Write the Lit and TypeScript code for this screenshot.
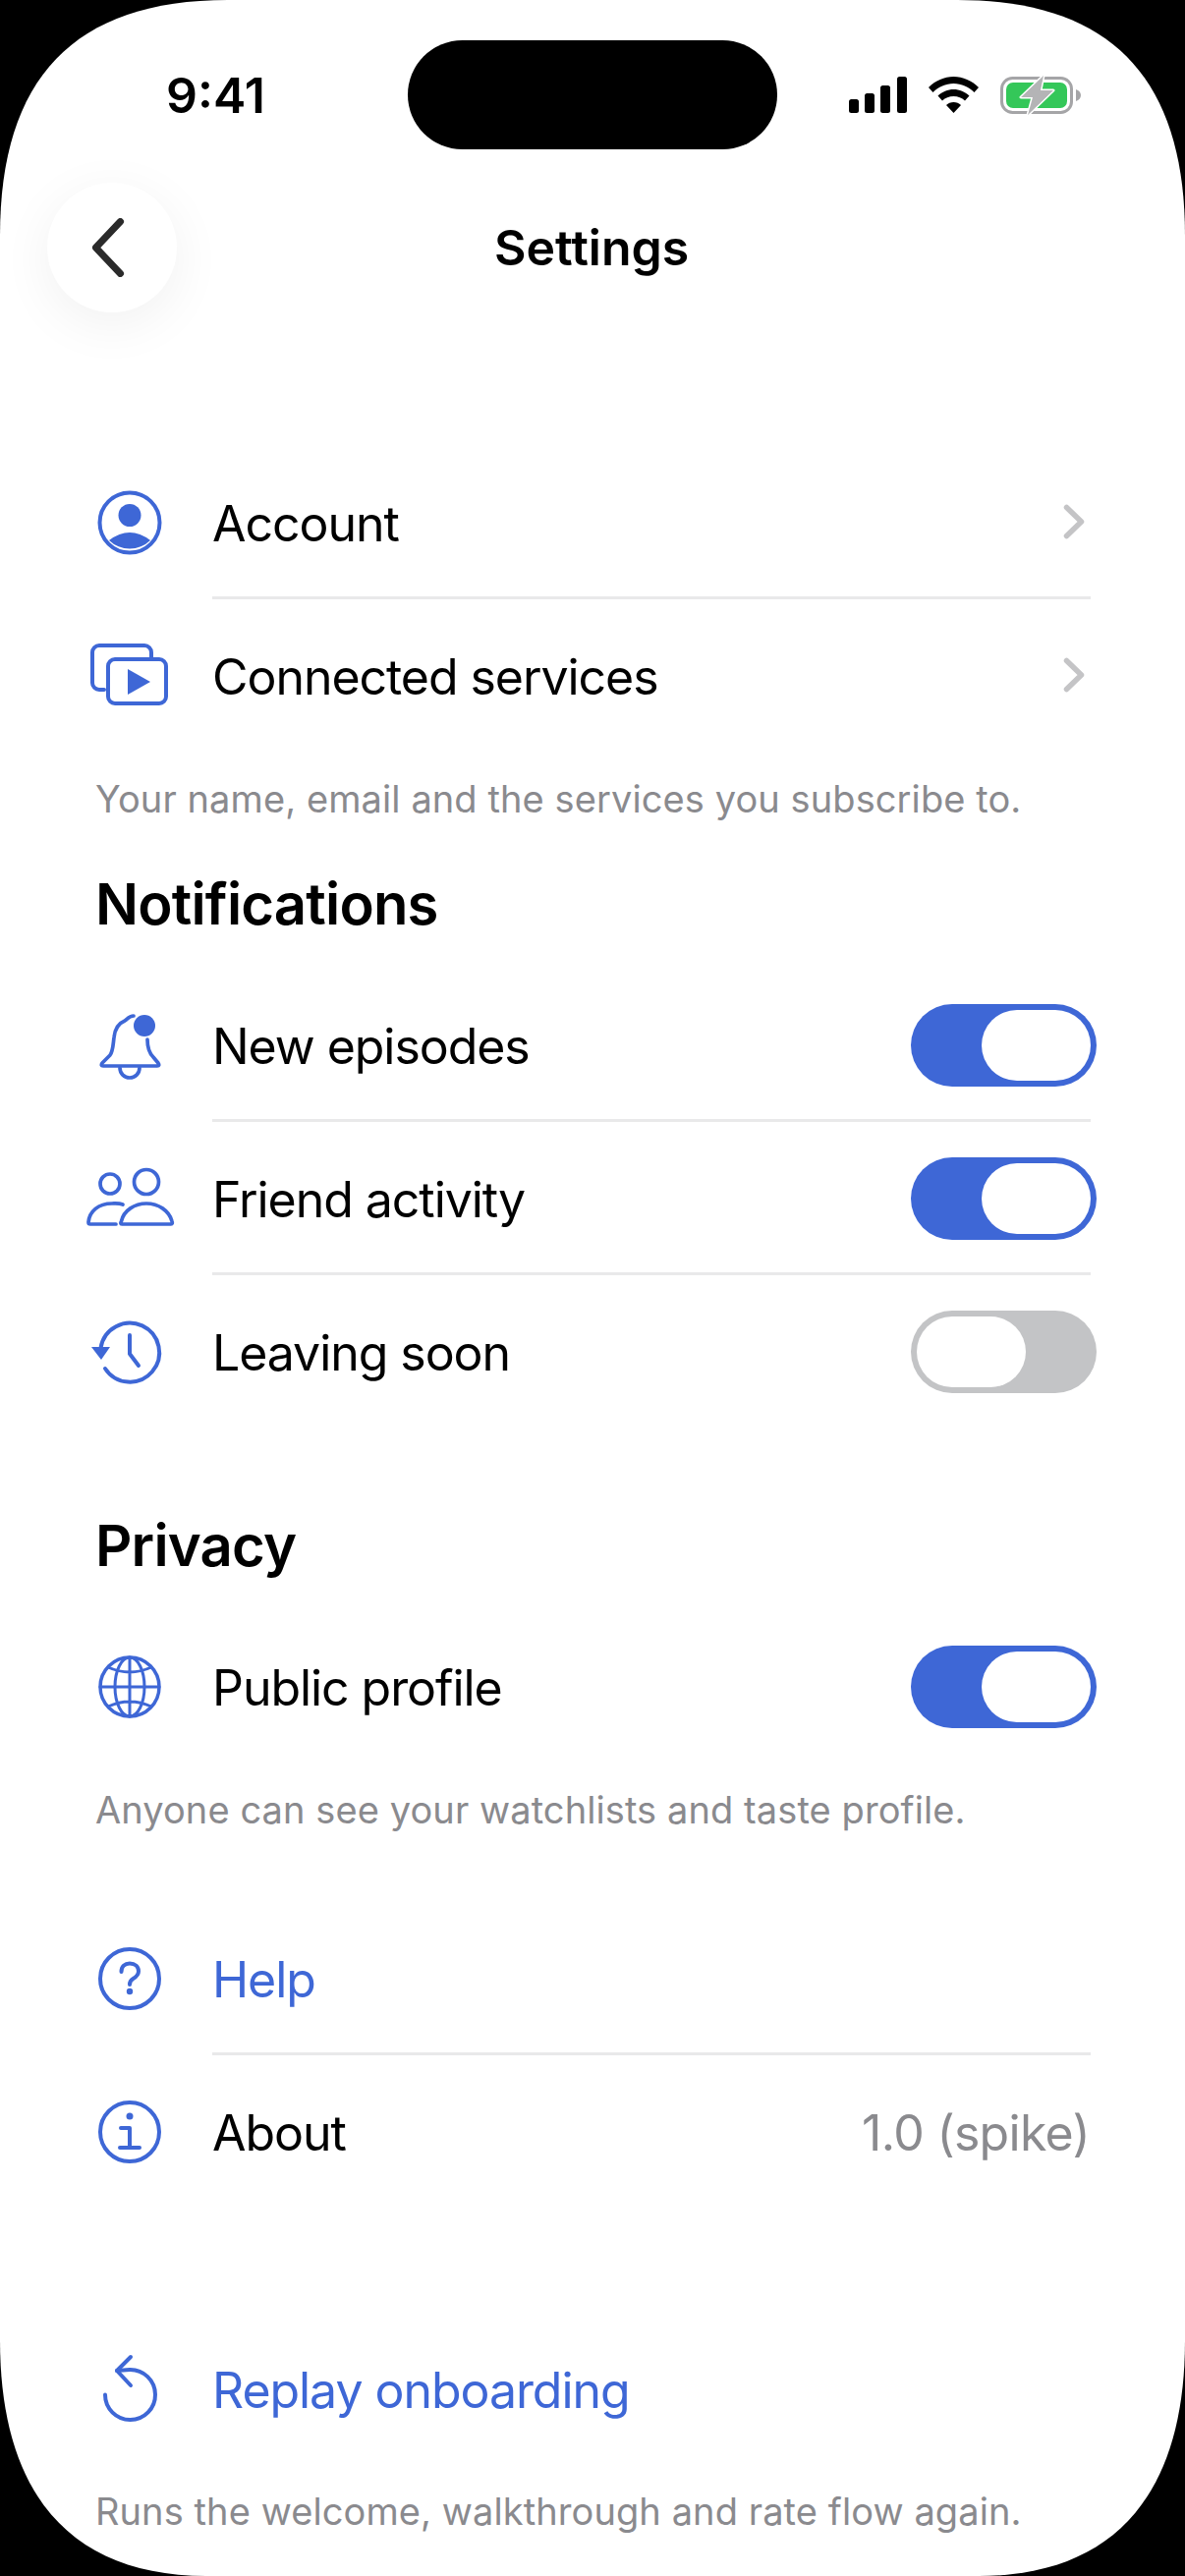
import { LitElement, html, svg, css, nothing } from 'lit';
import { customElement } from 'lit/decorators.js';

const icons: Record<string, unknown> = {
  account: svg`<circle cx="60" cy="60" r="30.5" fill="none" stroke-width="4"/><circle cx="60" cy="52.5" r="11.5" class="solid"/><path class="solid" d="M39 78Q60 62 81 78A30 30 0 0 1 39 78Z"/>`,
  services: svg`<path d="M34 74H29a7 7 0 0 1-7-7V36a7 7 0 0 1 7-7H75a7 7 0 0 1 7 7V41" stroke-width="4"/><rect x="38" y="43" width="59" height="45" rx="7" stroke-width="4"/><path class="solid" d="M58 53L81 66L58 79Z"/>`,
  bell: svg`<path d="M78 54C78 62 80 68 84 72L89 78Q91 81 88 81H33Q30 81 32 78L40 70C43 66 43 60 44 52C45 42 50 37 55 35C58 33 59 30 64 30"/><path d="M50 83A10 10 0 0 0 70 83"/><circle cx="75" cy="40" r="11" class="solid"/>`,
  friends: svg`<circle cx="40" cy="45" r="10"/><circle cx="77" cy="43" r="12.5"/><path d="M53 66C49 64.5 45 65 42 65C28 65 19 73 18 84Q18 86 20 86H46"/><path d="M52 86Q50 86 51.5 83C54 72 65 65 77 65C89 65 100 72 103 83Q104 86 102 86Z"/>`,
  history: svg`<path d="M30.5 56A30 30 0 1 1 35 77" stroke-width="4"/><path class="solid" d="M21 55H40L31 68Z"/><path d="M60 43V62L69 74" stroke-width="4"/>`,
  globe: svg`<circle cx="60" cy="60" r="30" stroke-width="3.5"/><ellipse cx="60" cy="60" rx="15" ry="30" stroke-width="3"/><path d="M60 30V90M30 60H90M38 40Q60 50 82 40M38 80Q60 70 82 80" stroke-width="3"/>`,
  help: svg`<circle cx="60" cy="60" r="30" stroke-width="4"/><path d="M51.5 53C51.5 47.5 55 44.5 60 44.5C65.5 44.5 69 48 69 52.5C69 56.5 66 58.5 63.5 60C61 61.5 60 63 60 66" stroke-width="4"/><circle cx="60" cy="73" r="3.2" class="solid"/>`,
  info: svg`<circle cx="60" cy="60" r="30" stroke-width="4"/><circle cx="60" cy="44" r="3.5" class="solid"/><path d="M51 56H60V76M50 76H70" stroke-width="4"/>`,
  replay: svg`<path d="M47 41L60 40A25.500 25.500 0 1 1 35 65.500" stroke-width="4"/><path d="M61 27L47 41L61 56" stroke-width="4"/>`,
};

@customElement('app-root')
export class AppRoot extends LitElement {
  static styles = css`
    :host {
      display: block;
      width: 1206px;
      height: 2622px;
      overflow: hidden;
      background: #000;
      font-family: Inter, 'Liberation Sans', sans-serif;
      color: #000;
    }
    .screen {
      height: 2622px;
      overflow: hidden;
      background: #fff;
      clip-path: path('M232 0H974C1131 0 1206 80 1206 240V2382C1206 2542 1131 2622 996 2622H210C75 2622 0 2542 0 2382V240C0 80 75 0 232 0Z');
    }
    .status {
      display: flex;
      align-items: center;
      height: 111px;
      padding: 41px 0 0 169px;
    }
    .time {
      width: 246px;
      font-size: 50px;
      font-weight: 600;
    }
    .island {
      width: 376px;
      height: 111px;
      border-radius: 56px;
      background: #000;
    }
    .status-icons {
      display: flex;
      align-items: center;
      margin-left: 73px;
      gap: 22px;
    }
    .header {
      display: flex;
      align-items: center;
      height: 133px;
      margin-top: 33px;
      padding-left: 48px;
    }
    .back {
      display: flex;
      align-items: center;
      justify-content: center;
      width: 132px;
      height: 132px;
      flex-shrink: 0;
      border-radius: 50%;
      background: #fff;
      box-shadow: 0 12px 54px rgba(0, 0, 0, 0.06);
    }
    .back svg {
      margin-right: 7px;
    }
    .title {
      margin-left: 323px;
      width: 195px;
      font-size: 50px;
      font-weight: 600;
      text-align: center;
      white-space: nowrap;
    }
    .account {
      margin-top: 136px;
    }
    .row {
      display: flex;
      align-items: stretch;
      height: 156px;
      padding-left: 84px;
      padding-right: 96px;
      box-sizing: border-box;
    }
    .icon {
      display: flex;
      align-items: center;
      justify-content: center;
      width: 96px;
      margin-right: 36px;
      flex-shrink: 0;
    }
    .icon svg {
      width: 120px;
      height: 120px;
      flex-shrink: 0;
      fill: none;
      stroke: #3e67d6;
      stroke-width: 3.7;
      stroke-linecap: round;
      stroke-linejoin: round;
    }
    .icon svg .solid {
      fill: #3e67d6;
      stroke: none;
    }
    .body {
      display: flex;
      flex: 1;
      align-items: center;
      justify-content: space-between;
      padding-top: 3px;
      border-bottom: 3px solid transparent;
    }
    .row.line .body {
      border-bottom-color: #e9e9ea;
    }
    .label {
      padding-top: 2px;
      font-size: 50px;
      letter-spacing: -1.05px;
      white-space: nowrap;
    }
    .blue {
      color: #3e67d6;
    }
    .value {
      margin-right: 1px;
      padding-top: 2px;
      font-size: 50px;
      letter-spacing: -0.7px;
      color: #8a8a8e;
    }
    .chev {
      margin-right: 4px;
    }
    .toggle {
      display: flex;
      align-items: center;
      width: 189px;
      height: 84px;
      margin-right: -6px;
      padding: 6px;
      box-sizing: border-box;
      border-radius: 42px;
      background: #3e67d6;
      justify-content: flex-end;
    }
    .toggle.off {
      background: #c3c4c6;
      justify-content: flex-start;
    }
    .thumb {
      width: 111px;
      height: 72px;
      border-radius: 36px;
      background: #fff;
    }
    .note {
      margin-top: 21px;
      padding-left: 97px;
      font-size: 38px;
      line-height: 52px;
      letter-spacing: 0.09px;
      color: #8a8a8e;
      white-space: nowrap;
    }
    .heading {
      padding-left: 97px;
      margin-bottom: 30px;
      font-size: 58px;
      line-height: 72px;
      letter-spacing: -0.8px;
      font-weight: 600;
    }
    .notifications {
      margin-top: 45px;
    }
    .privacy {
      margin-top: 83px;
    }
    .support {
      margin-top: 68px;
    }
    .replay {
      margin-top: 106px;
    }
    .replay .note {
      margin-top: 20px;
    }
  `;

  renderRow(icon: string, label: string, opts: { line?: boolean; blue?: boolean; chev?: boolean; toggle?: 'on' | 'off'; value?: string } = {}) {
    return html`
      <div class="row ${opts.line ? 'line' : ''}">
        <div class="icon"><svg viewBox="0 0 120 120">${icons[icon]}</svg></div>
        <div class="body">
          <span class="label ${opts.blue ? 'blue' : ''}">${label}</span>
          ${opts.chev
            ? html`<svg class="chev" width="24" height="38" viewBox="0 0 24 38" fill="none" stroke="#c4c4c6" stroke-width="5.5" stroke-linecap="round" stroke-linejoin="round"><path d="M3.500 3.500L18.500 18L3.500 32.500"/></svg>`
            : nothing}
          ${opts.toggle
            ? html`<div class="toggle ${opts.toggle === 'off' ? 'off' : ''}"><div class="thumb"></div></div>`
            : nothing}
          ${opts.value ? html`<span class="value">${opts.value}</span>` : nothing}
        </div>
      </div>
    `;
  }

  render() {
    return html`
      <div class="screen">
        <div class="status">
          <div class="time">9:41</div>
          <div class="island"></div>
          <div class="status-icons">
            <svg width="59" height="37" viewBox="0 0 59 37" fill="#000">
              <rect x="0" y="23" width="10" height="14" rx="2.5"/>
              <rect x="16" y="17" width="10" height="20" rx="2.5"/>
              <rect x="32" y="9" width="10" height="28" rx="2.5"/>
              <rect x="49" y="0" width="10" height="37" rx="2.5"/>
            </svg>
            <svg width="51" height="37" viewBox="0 0 51 37" fill="#000">
              <path d="M25.5 0C35 0 44 4 51 11L46.5 16C41 10.500 33.500 7 25.500 7C17.500 7 10 10.500 4.500 16L0 11C7 4 16 0 25.500 0Z"/>
              <path d="M25.500 13C31.500 13 37 15.500 41.500 19.500L37 24.500C34 21.500 30 20 25.500 20C21 20 17 21.500 14 24.500L9.500 19.500C14 15.500 19.500 13 25.500 13Z"/>
              <path d="M25.500 26C28.500 26 31 27 33 29L25.500 37L18 29C20 27 22.500 26 25.500 26Z"/>
            </svg>
            <svg width="82" height="40" viewBox="0 0 82 40">
              <rect x="1.500" y="2.500" width="71" height="35" rx="11" fill="none" stroke="#a5a5a7" stroke-width="3"/>
              <rect x="6" y="7" width="62" height="26" rx="7" fill="#34c759"/>
              <path d="M77 14C80 15 82 17 82 20C82 23 80 25 77 26Z" fill="#a5a5a7"/>
              <path d="M44 0L21 22H33L28 40L54 15H41Z" fill="#b4b4b6" stroke="#fff" stroke-width="3" paint-order="stroke" stroke-linejoin="round"/>
            </svg>
          </div>
        </div>
        <div class="header">
          <div class="back">
            <svg width="36" height="60" viewBox="0 0 36 60" fill="none" stroke="#2b2b2b" stroke-width="7" stroke-linecap="round" stroke-linejoin="round"><path d="M29.500 3.500L4.500 30L29.500 56.500"/></svg>
          </div>
          <div class="title">Settings</div>
        </div>

        <div class="account">
          ${this.renderRow('account', 'Account', { line: true, chev: true })}
          ${this.renderRow('services', 'Connected services', { chev: true })}
          <div class="note">Your name, email and the services you subscribe to.</div>
        </div>

        <div class="notifications">
          <div class="heading">Notifications</div>
          ${this.renderRow('bell', 'New episodes', { line: true, toggle: 'on' })}
          ${this.renderRow('friends', 'Friend activity', { line: true, toggle: 'on' })}
          ${this.renderRow('history', 'Leaving soon', { toggle: 'off' })}
        </div>

        <div class="privacy">
          <div class="heading">Privacy</div>
          ${this.renderRow('globe', 'Public profile', { toggle: 'on' })}
          <div class="note">Anyone can see your watchlists and taste profile.</div>
        </div>

        <div class="support">
          ${this.renderRow('help', 'Help', { line: true, blue: true })}
          ${this.renderRow('info', 'About', { value: '1.0 (spike)' })}
        </div>

        <div class="replay">
          ${this.renderRow('replay', 'Replay onboarding', { blue: true })}
          <div class="note">Runs the welcome, walkthrough and rate flow again.</div>
        </div>
      </div>
    `;
  }
}
